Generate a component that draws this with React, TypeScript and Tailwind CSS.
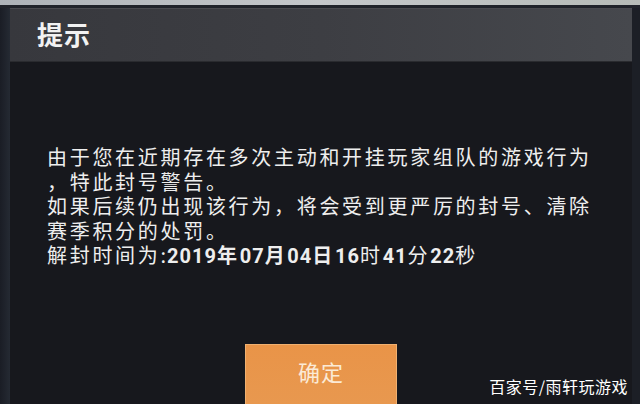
export default function App() {
  const cjk = { fontFamily: '"Noto Sans CJK SC", "Noto Sans", sans-serif' };
  const num = { fontFamily: 'Roboto, "Noto Sans", sans-serif' };

  return (
    <div className="relative w-[640px] h-[404px] overflow-hidden bg-[#1b1e25] flex flex-col" style={cjk}>
      {/* backdrop strip behind dialog */}
      <div className="h-[5px] bg-gradient-to-r from-[#aeb3b8] via-[#c4c7ca] to-[#b7bcb8] shrink-0" />
      <div className="h-[3px] bg-[#20232a] shrink-0" />
      <div className="flex flex-1 min-h-0">
        <div className="w-[10px] shrink-0 bg-gradient-to-r from-[#1a1d25] to-[#252a33]" />
        <div className="flex-1 flex flex-col bg-[#17181d]">
          <div className="h-[54px] shrink-0 flex items-center pl-[27px] pb-[2px] bg-gradient-to-r from-[#37383d] via-[#3d3e43] to-[#46484d] border-t border-[#4a4b50] border-b border-b-[#2a2b2f]">
            <span className="text-[26px] font-bold text-[#f2f2f2] tracking-[1px] leading-none">提示</span>
          </div>
          <div className="flex-1 flex flex-col pl-[37px] pt-[83px]">
            <div className="text-[20px] leading-[24.5px] tracking-[2.7px] text-[#eeeeee] whitespace-nowrap">
              <div>由于您在近期存在多次主动和开挂玩家组队的游戏行为</div>
              <div>，特此封号警告。</div>
              <div>如果后续仍出现该行为，将会受到更严厉的封号、清除</div>
              <div>赛季积分的处罚。</div>
              <div>
                解封时间为<span className="tracking-[1px]">:</span>
                <span className="font-bold tracking-[1px]" style={num}>2019</span>
                <span className="font-bold">年</span>
                <span className="font-bold tracking-[1px]" style={num}>07</span>
                <span className="font-bold">月</span>
                <span className="font-bold tracking-[1px]" style={num}>04</span>
                <span className="font-bold">日</span>
                <span className="font-bold tracking-[1px]" style={num}>16</span>
                <span>时</span>
                <span className="font-bold tracking-[1px]" style={num}>41</span>
                <span>分</span>
                <span className="font-bold tracking-[1px]" style={num}>22</span>
                <span>秒</span>
              </div>
            </div>
            <div className="mt-auto flex justify-center pr-[37px]">
              <button className="w-[152px] h-[60px] bg-gradient-to-b from-[#e99448] to-[#e8984f] border-t border-x border-[#f0b070] text-[#fbead6] text-[22px] flex justify-center pt-[10px] tracking-[1px]">
                确定
              </button>
            </div>
          </div>
        </div>
        <div className="w-[8px] shrink-0 bg-[#1c1f26]" />
      </div>
      <div className="absolute right-[12px] bottom-[10px] text-[16px] text-white leading-none tracking-[0.5px]">
        百家号/雨轩玩游戏
      </div>
    </div>
  );
}
